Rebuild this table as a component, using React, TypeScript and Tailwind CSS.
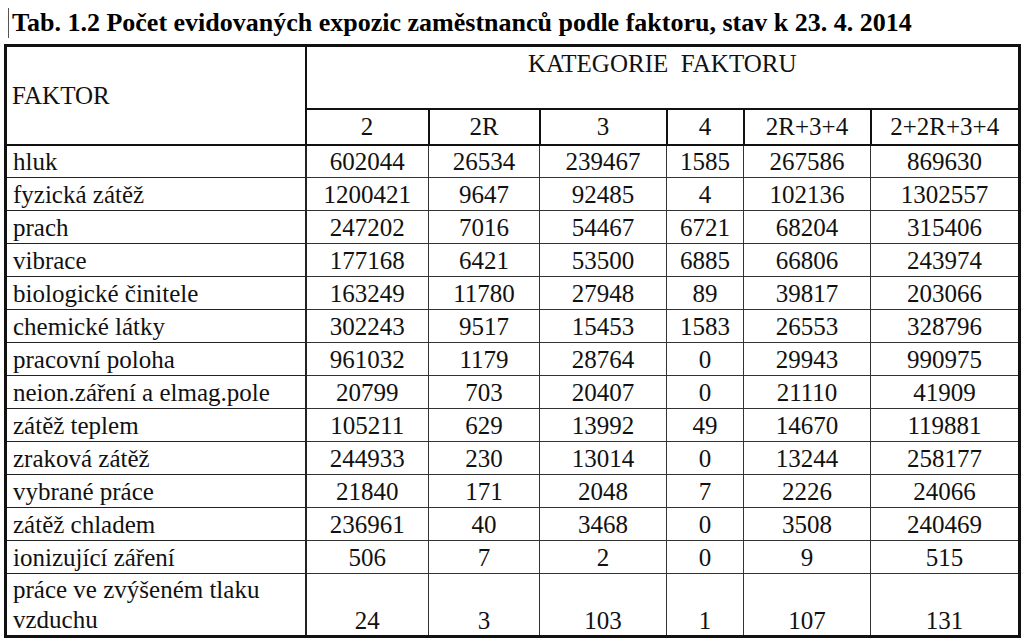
import React from "react";

const cols = ["2", "2R", "3", "4", "2R+3+4", "2+2R+3+4"];

const rows: string[][] = [
  ["hluk", "602044", "26534", "239467", "1585", "267586", "869630"],
  ["fyzická zátěž", "1200421", "9647", "92485", "4", "102136", "1302557"],
  ["prach", "247202", "7016", "54467", "6721", "68204", "315406"],
  ["vibrace", "177168", "6421", "53500", "6885", "66806", "243974"],
  ["biologické činitele", "163249", "11780", "27948", "89", "39817", "203066"],
  ["chemické látky", "302243", "9517", "15453", "1583", "26553", "328796"],
  ["pracovní poloha", "961032", "1179", "28764", "0", "29943", "990975"],
  ["neion.záření a elmag.pole", "20799", "703", "20407", "0", "21110", "41909"],
  ["zátěž teplem", "105211", "629", "13992", "49", "14670", "119881"],
  ["zraková zátěž", "244933", "230", "13014", "0", "13244", "258177"],
  ["vybrané práce", "21840", "171", "2048", "7", "2226", "24066"],
  ["zátěž chladem", "236961", "40", "3468", "0", "3508", "240469"],
  ["ionizující záření", "506", "7", "2", "0", "9", "515"],
];

const last = ["práce ve zvýšeném tlaku vzduchu", "24", "3", "103", "1", "107", "131"];

const cell = "font-[Liberation_Serif] border border-[#333] text-center";
const label = "font-[Liberation_Serif] border-r-2 border-b border-[#222] text-left pl-[6px] whitespace-nowrap";

export default function App() {
  return (
    <div className="font-serif font-[Liberation_Serif] bg-white w-[1024px] h-[643px] overflow-hidden text-black">
      <div className="pt-[8px] pl-[8px]">
        <div className="font-[Liberation_Serif] border-l border-[#555] pl-[3px] text-[26px] font-bold leading-[30px] whitespace-nowrap">
          Tab. 1.2 Počet evidovaných expozic zaměstnanců podle faktoru, stav k 23. 4. 2014
        </div>
      </div>
      <table className="font-[Liberation_Serif] ml-[4px] mt-[6px] w-[1014px] table-fixed border-collapse border-[3px] border-[#111] text-[25px] leading-[29px] text-[#111]">
        <colgroup>
          <col className="w-[300px]" />
          <col className="w-[123px]" />
          <col className="w-[111px]" />
          <col className="w-[127px]" />
          <col className="w-[77px]" />
          <col className="w-[127px]" />
          <col className="w-[149px]" />
        </colgroup>
        <thead>
          <tr className="h-[63px]">
            <th
              rowSpan={2}
              className="font-[Liberation_Serif] border-r-2 border-b-2 border-[#111] text-left align-middle font-normal pl-[5px]"
            >
              FAKTOR
            </th>
            <th
              colSpan={6}
              className="font-[Liberation_Serif] border-b-2 border-[#111] align-top font-normal text-center whitespace-pre pt-[2px]"
            >
              KATEGORIE  FAKTORU
            </th>
          </tr>
          <tr className="h-[36px]">
            {cols.map((c) => (
              <th key={c} className="font-[Liberation_Serif] border-2 border-[#111] font-normal text-center align-middle">
                {c}
              </th>
            ))}
          </tr>
        </thead>
        <tbody>
          {rows.map((r) => (
            <tr key={r[0]} className="h-[33px]">
              <td className={label}>{r[0]}</td>
              {r.slice(1).map((v, i) => (
                <td key={i} className={cell}>
                  {v}
                </td>
              ))}
            </tr>
          ))}
          <tr className="h-[62px]">
            <td className="font-[Liberation_Serif] border-r-2 border-[#222] text-left pl-[6px] pt-[1px] leading-[30px] align-top">
              {last[0]}
            </td>
            {last.slice(1).map((v, i) => (
              <td key={i} className={cell + " align-bottom"}>
                {v}
              </td>
            ))}
          </tr>
        </tbody>
      </table>
    </div>
  );
}
